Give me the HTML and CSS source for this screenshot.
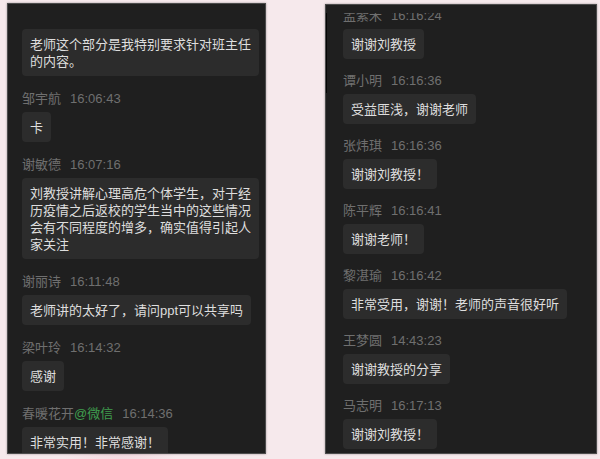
FILE: index.html
```html
<!DOCTYPE html>
<html lang="zh-CN">
<head>
  <meta charset="UTF-8">
  <meta name="viewport" content="width=device-width, initial-scale=1.0">
  <title>聊天记录</title>
  <link rel="stylesheet" href="styles.css">
</head>
<body>
  <div class="board">

    <!-- Left chat panel -->
    <div class="panel panel-left">
      <div class="msg">
        <div class="bubble">老师这个部分是我特别要求针对班主任的内容。</div>
      </div>
      <div class="msg">
        <div class="meta"><span class="name">邹宇航</span><span class="time">16:06:43</span></div>
        <div class="bubble">卡</div>
      </div>
      <div class="msg">
        <div class="meta"><span class="name">谢敏德</span><span class="time">16:07:16</span></div>
        <div class="bubble">刘教授讲解心理高危个体学生，对于经历疫情之后返校的学生当中的这些情况会有不同程度的增多，确实值得引起人家关注</div>
      </div>
      <div class="msg">
        <div class="meta"><span class="name">谢丽诗</span><span class="time">16:11:48</span></div>
        <div class="bubble">老师讲的太好了，请问ppt可以共享吗</div>
      </div>
      <div class="msg">
        <div class="meta"><span class="name">梁叶玲</span><span class="time">16:14:32</span></div>
        <div class="bubble">感谢</div>
      </div>
      <div class="msg">
        <div class="meta"><span class="name">春暖花开<span class="source">@微信</span></span><span class="time">16:14:36</span></div>
        <div class="bubble">非常实用！非常感谢！</div>
      </div>
    </div>

    <!-- Right chat panel -->
    <div class="panel panel-right">
      <div class="msg first">
        <div class="meta"><span class="name">孟紫米</span><span class="time">16:16:24</span></div>
        <div class="bubble">谢谢刘教授</div>
      </div>
      <div class="msg">
        <div class="meta"><span class="name">谭小明</span><span class="time">16:16:36</span></div>
        <div class="bubble">受益匪浅，谢谢老师</div>
      </div>
      <div class="msg">
        <div class="meta"><span class="name">张炜琪</span><span class="time">16:16:36</span></div>
        <div class="bubble">谢谢刘教授！</div>
      </div>
      <div class="msg">
        <div class="meta"><span class="name">陈平辉</span><span class="time">16:16:41</span></div>
        <div class="bubble">谢谢老师！</div>
      </div>
      <div class="msg">
        <div class="meta"><span class="name">黎湛瑜</span><span class="time">16:16:42</span></div>
        <div class="bubble">非常受用，谢谢！老师的声音很好听</div>
      </div>
      <div class="msg">
        <div class="meta"><span class="name">王梦圆</span><span class="time">14:43:23</span></div>
        <div class="bubble">谢谢教授的分享</div>
      </div>
      <div class="msg">
        <div class="meta"><span class="name">马志明</span><span class="time">16:17:13</span></div>
        <div class="bubble">谢谢刘教授！</div>
      </div>
    </div>

  </div>
</body>
</html>
```

FILE: styles.css
```css
/* General reset */
* {
  margin: 0;
  padding: 0;
  box-sizing: border-box;
}

body {
  font-family: "Liberation Sans", "Noto Sans CJK SC", sans-serif;
  font-size: 13px;
  background-color: #f6e9ec;
  background-image:
    radial-gradient(circle at 20% 95%, rgba(240, 200, 210, 0.6), transparent 60px),
    radial-gradient(circle at 95% 20%, rgba(240, 205, 212, 0.5), transparent 80px);
  width: 600px;
  height: 459px;
  overflow: hidden;
}

.board {
  display: flex;
  align-items: flex-start;
  gap: 59px;
  padding: 3px 3px 0 7px;
}

.panel {
  position: relative;
  height: 451px;
  background: #1f1f1f;
  border: 1px solid #4c4c4c;
  box-shadow: 0 0 2px rgba(0, 0, 0, 0.35);
  overflow: hidden;
}

.panel-left {
  width: 259px;
  padding: 25px 0 0 14px;
}

.panel-right {
  width: 272px;
  height: 450px;
  margin-top: 1px;
  padding: 0 0 0 17px;
}

/* header strip that hides the top of the scrolled list */
.panel-right::before {
  content: "";
  position: absolute;
  top: 0;
  left: 0;
  right: 0;
  height: 8px;
  background: #1f1f1f;
  z-index: 1;
}

/* dark scrollbar shadow on the left edge */
.panel-right::after {
  content: "";
  position: absolute;
  top: 0;
  left: -1px;
  width: 2px;
  height: 88px;
  background: #050505;
}

.msg {
  display: flex;
  flex-direction: column;
  align-items: flex-start;
}

.panel-left .msg {
  margin-bottom: 13.5px;
}

.panel-right .msg {
  margin-bottom: 12.5px;
}

.panel-right .msg.first {
  padding-top: 1.5px;
}

.meta {
  line-height: 17px;
  margin-bottom: 5.5px;
  color: #6f6f6f;
  white-space: nowrap;
}

.time {
  margin-left: 9px;
}

.source {
  color: #3f9d4e;
}

.bubble {
  max-width: 237px;
  padding: 6.5px 8px;
  line-height: 17px;
  color: #dedede;
  background: #2c2c2c;
  border-radius: 4px;
}
```
